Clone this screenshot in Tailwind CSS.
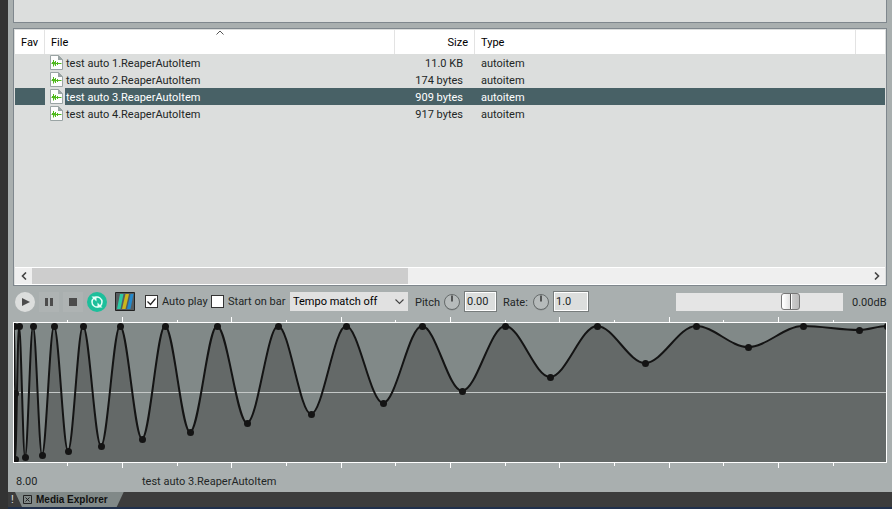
<!DOCTYPE html>
<html lang="en">
<head>
<meta charset="utf-8">
<title>Media Explorer</title>
<script src="https://cdn.jsdelivr.net/npm/@tailwindcss/browser@4"></script>
</head>
<body class="min-h-screen bg-[#a9afaf] font-[Roboto,sans-serif] text-[11px] leading-4 text-[#222626] overflow-hidden">
<svg class="hidden">
  <symbol id="wave" viewBox="0 0 13 15">
    <path d="M.5 .5H8.500L12.500 4.500V14.500H.5Z" fill="#fdfdfd" stroke="#9aa4a4"/>
    <path d="M8 0L13 5H8Z" fill="#9aa4a4"/>
    <path d="M1.500 8.500H11.500M2.500 7V9M3.500 5V11.500M4.500 7V9.500M5.500 6V11M7.500 7V10" fill="none" stroke="#4fb91c"/>
  </symbol>
  <symbol id="knob" viewBox="0 0 18 18">
    <circle cx="9" cy="10" r="7.500" fill="#8b9090"/>
    <circle cx="9" cy="9" r="7.500" fill="#b6bbbb" stroke="#666b6b"/>
    <path d="M9 2.500V8.500" stroke="#111" stroke-width="1.200"/>
  </symbol>
</svg>
<div class="flex min-h-screen">
  <div class="w-2 shrink-0 bg-[#333]"></div>
  <div class="flex min-w-0 flex-1 flex-col">
    <main class="flex flex-1 flex-col pl-[5px] pr-[5px]">
      <div class="h-[23px] border border-t-0 border-[#7f878d] bg-[#dcdedd]"></div>
      <section class="mt-[5px] flex h-[258px] flex-col border border-[#7f878d] bg-[#dcdedd] p-px pb-0">
        <table class="w-full table-fixed border-separate border-spacing-0">
          <colgroup><col class="w-[30px]"><col class="w-[350px]"><col class="w-[80px]"><col class="w-[381px]"><col></colgroup>
          <thead class="bg-white text-black">
            <tr class="h-6 text-left">
              <th class="border-r border-[#e3e3e3] p-0 pl-[6px] pt-px font-normal">Fav</th>
              <th class="relative border-r border-[#e3e3e3] p-0 pl-[6px] pt-px font-normal" aria-sort="ascending">File
                <svg class="absolute left-1/2 top-0 h-[5px] w-[9px] -translate-x-1/2" viewBox="0 0 9 5"><path d="M1 4.500L4.500 1L8 4.500" fill="none" stroke="#555"/></svg></th>
              <th class="border-r border-[#e3e3e3] p-0 pr-[6px] pt-px text-right font-normal">Size</th>
              <th class="border-r border-[#e3e3e3] p-0 pl-[6px] pt-px font-normal">Type</th>
              <td></td>
            </tr>
          </thead>
          <tbody class="leading-[15px]">
            <tr class="h-[17px]"><td></td><td class="p-0"><div class="flex h-[17px] items-center"><span class="flex w-5 justify-center"><svg class="ml-[3px] h-[15px] w-[13px]"><use href="#wave"/></svg></span><span class="pl-px pt-[2px]">test auto 1.ReaperAutoItem</span></div></td><td class="p-0 pr-3 pt-[2px] text-right">11.0 KB</td><td class="p-0 pl-[6px] pt-[2px]">autoitem</td><td></td></tr>
            <tr class="h-[17px]"><td></td><td class="p-0"><div class="flex h-[17px] items-center"><span class="flex w-5 justify-center"><svg class="ml-[3px] h-[15px] w-[13px]"><use href="#wave"/></svg></span><span class="pl-px pt-[2px]">test auto 2.ReaperAutoItem</span></div></td><td class="p-0 pr-3 pt-[2px] text-right">174 bytes</td><td class="p-0 pl-[6px] pt-[2px]">autoitem</td><td></td></tr>
            <tr class="h-[17px] text-white"><td class="bg-[#486166]"></td><td class="p-0"><div class="flex h-[17px] items-center"><span class="flex w-5 justify-center"><svg class="ml-[3px] h-[15px] w-[13px]"><use href="#wave"/></svg></span><span class="flex-1 bg-[#486166] pl-px pt-[2px]">test auto 3.ReaperAutoItem</span></div></td><td class="bg-[#486166] p-0 pr-3 pt-[2px] text-right">909 bytes</td><td class="bg-[#486166] p-0 pl-[6px] pt-[2px]">autoitem</td><td class="bg-[#486166]"></td></tr>
            <tr class="h-[17px]"><td></td><td class="p-0"><div class="flex h-[17px] items-center"><span class="flex w-5 justify-center"><svg class="ml-[3px] h-[15px] w-[13px]"><use href="#wave"/></svg></span><span class="pl-px pt-[2px]">test auto 4.ReaperAutoItem</span></div></td><td class="p-0 pr-3 pt-[2px] text-right">917 bytes</td><td class="p-0 pl-[6px] pt-[2px]">autoitem</td><td></td></tr>
          </tbody>
        </table>
        <div class="mt-auto flex h-[18px] border-y border-white bg-[#efefef]">
          <button class="flex w-[17px] items-center justify-center" aria-label="Scroll left"><svg class="h-2 w-[6px]" viewBox="0 0 6 8"><path d="M5 .5L1.500 4L5 7.500" fill="none" stroke="#444" stroke-width="1.600"/></svg></button>
          <div class="flex-1"><div class="h-full w-[45%] bg-[#cdcdcd]"></div></div>
          <button class="flex w-[17px] items-center justify-center" aria-label="Scroll right"><svg class="h-2 w-[6px]" viewBox="0 0 6 8"><path d="M1 .5L4.500 4L1 7.500" fill="none" stroke="#444" stroke-width="1.600"/></svg></button>
        </div>
      </section>
      <div class="flex h-[31px] items-center pl-[2px]">
        <div class="flex gap-1">
          <button class="size-5" aria-label="Play"><svg viewBox="0 0 20 20"><circle cx="10" cy="10" r="10" fill="#dcdedd"/><path d="M7 6L15 10L7 14Z" fill="#4c4c4c"/></svg></button>
          <button class="size-5 bg-[#aeb3b3]" aria-label="Pause"><svg viewBox="0 0 20 20"><path d="M6 6H9V14H6ZM11 6H14V14H11Z" fill="#4c4c4c"/></svg></button>
          <button class="size-5 bg-[#aeb3b3]" aria-label="Stop"><svg viewBox="0 0 20 20"><path d="M6 6H14V14H6Z" fill="#4c4c4c"/></svg></button>
          <button class="size-5" aria-label="Repeat"><svg viewBox="0 0 20 20"><circle cx="10" cy="10" r="10" fill="#1cbf9b"/><path d="M7 14A5 5 0 0 1 7 6M13 6A5 5 0 0 1 13 14M8.500 5.200A5 5 0 0 1 13 6M11.500 14.800A5 5 0 0 1 7 14" fill="none" stroke="#e6fff8" stroke-width="1.500"/><path d="M4.500 4.500H9.500V9.500ZM15.500 15.500H10.500V10.500Z" fill="#e6fff8"/></svg></button>
        </div>
        <button class="ml-2 size-5" aria-label="Peaks display"><svg viewBox="0 0 20 20"><path d="M.5 .5H19.500V18.500H.5Z" fill="#555c5f" stroke="#222"/><path d="M5 2H8.500L5.500 17H2Z" fill="#2cc9a4"/><path d="M10.500 2H14L10.500 17H7Z" fill="#cdb61c"/><path d="M15.500 2H18.500L15.500 17H12Z" fill="#2489cc"/></svg></button>
        <label class="ml-[10px] flex items-center gap-1"><span class="relative flex"><input type="checkbox" checked class="peer size-[13px] appearance-none border border-[#333] bg-white"><svg class="pointer-events-none absolute inset-0 hidden size-[13px] peer-checked:block" viewBox="0 0 13 13"><path d="M2.500 6.500L5.500 9.500L10.500 3.500" fill="none" stroke="#222" stroke-width="1.200"/></svg></span><span class="w-[49px] whitespace-nowrap pt-px">Auto play</span></label>
        <label class="flex items-center gap-1"><input type="checkbox" class="size-[13px] appearance-none border border-[#333] bg-white"><span class="w-[62px] whitespace-nowrap pt-px">Start on bar</span></label>
        <span class="relative flex"><select aria-label="Tempo match" class="h-[19px] w-[118px] appearance-none bg-[#e1e1e1] pl-[3px] pt-px text-black"><option>Tempo match off</option></select><svg class="pointer-events-none absolute right-1 top-[7px] h-[6px] w-[9px]" viewBox="0 0 9 6"><path d="M.5 .5L4.500 4.500L8.500 .5" fill="none" stroke="#444" stroke-width="1.100"/></svg></span>
        <label for="pitch" class="ml-[7px] w-7 whitespace-nowrap pt-[2px]">Pitch</label>
        <svg class="size-[18px]"><use href="#knob"/></svg>
        <input id="pitch" value="0.00" class="ml-[3px] h-[21px] w-[33px] border border-[#777c7c] bg-[#dcdedd] pl-[2px] shadow-[inset_0_0_0_1px_white]">
        <label for="rate" class="ml-[6px] w-[29px] whitespace-nowrap pt-[2px]">Rate:</label>
        <svg class="size-[18px]"><use href="#knob"/></svg>
        <input id="rate" value="1.0" class="ml-[3px] h-[21px] w-9 border border-[#777c7c] bg-[#dcdedd] pl-[2px] shadow-[inset_0_0_0_1px_white]">
        <input type="range" aria-label="Volume" value="71" class="ml-auto h-[18px] w-[167px] appearance-none bg-[#e5e5e5] [&::-webkit-slider-thumb]:h-[17px] [&::-webkit-slider-thumb]:w-[19px] [&::-webkit-slider-thumb]:appearance-none [&::-webkit-slider-thumb]:rounded-[3px] [&::-webkit-slider-thumb]:border [&::-webkit-slider-thumb]:border-[#777] [&::-webkit-slider-thumb]:bg-[linear-gradient(90deg,#fff_0_1px,#e2e2e2_8px,#555_8px_9px,#fff_9px_10px,#ccc_10px,#bbb)]">
        <output class="ml-[9px] w-[35px] whitespace-nowrap pt-[2px]">0.00dB</output>
      </div>
      <svg class="h-[152px] w-full" viewBox="13 317 874 152" preserveAspectRatio="none" role="img" aria-label="Envelope preview">
        <rect x="13.500" y="322.500" width="873" height="140" fill="#818988"/>
        <path id="fill" fill="#646968"/>
        <path d="M14 392.500H886" stroke="#c4c8c7"/>
        <path d="M122.500 317V322M231.500 317V322M341.500 317V322M450.500 317V322M559.500 317V322M669.500 317V322M778.500 317V322M67.500 320V322M177.500 320V322M286.500 320V322M395.500 320V322M505.500 320V322M614.500 320V322M723.500 320V322M833.500 320V322M122.500 463V468M231.500 463V468M341.500 463V468M450.500 463V468M559.500 463V468M669.500 463V468M778.500 463V468M67.500 463V466M177.500 463V466M286.500 463V466M395.500 463V466M505.500 463V466M614.500 463V466M723.500 463V466M833.500 463V466" stroke="#fff"/>
        <svg x="14" y="323" width="873" height="140" viewBox="14 323 873 140"><path id="curve" fill="none" stroke="#141414" stroke-width="2"/><g id="dots" fill="#141414"></g></svg>
        <rect x="13.500" y="322.500" width="873" height="140" fill="none" stroke="#fff"/>
      </svg>
      <div class="flex h-[23px] items-center pl-[3px] pt-[2px]">
        <span class="w-[126px]">8.00</span><span>test auto 3.ReaperAutoItem</span>
      </div>
    </main>
    <footer class="flex h-[17px] border-b-2 border-[#20304c] bg-[#3c3c3c]">
      <span class="w-[7px] pl-[3px] font-['Liberation_Sans',sans-serif] text-[10px] leading-[15px] text-[#e5e5e5]">!</span>
      <button class="flex items-center gap-1 bg-[#818988] pl-2 pr-4 font-['Liberation_Sans',sans-serif] text-[10px] font-bold text-[#111] [clip-path:polygon(0_0,100%_0,calc(100%_-_7px)_100%,7px_100%)]"><svg class="size-[9px]" viewBox="0 0 9 9"><path d="M.5 .5H8.500V8.500H.5ZM2.500 2.500L6.500 6.500M6.500 2.500L2.500 6.500" fill="none" stroke="#222"/></svg>Media Explorer</button>
    </footer>
  </div>
</div>
<script>
  const points = [[14,326],[15,393],[15,459],[19,326],[25,457],[33,326],[42,455],[54,326],[68,451],[83,326],[101,446],[120,326],[142,439],[165,326],[190,432],[217,326],[247,423],[278,326],[311,414],[346,326],[383,403],[422,326],[462,391],[505,326],[550,377],[597,326],[645,363],[696,326],[748,347],[803,326],[859,330],[887,326]];
  let d = 'M' + points[0];
  for (let i = 1; i < points.length; i++) {
    const [x0, y0] = points[i - 1], [x1, y1] = points[i], third = (x1 - x0) * 0.34;
    d += `C${x0 + third} ${y0} ${x1 - third} ${y1} ${x1} ${y1}`;
  }
  document.getElementById('curve').setAttribute('d', d);
  document.getElementById('fill').setAttribute('d', d + 'V462H14Z');
  document.getElementById('dots').innerHTML = points.map(([x, y]) => `<circle cx="${x + .5}" cy="${y + .5}" r="3.500"/>`).join('');
</script>
</body>
</html>
